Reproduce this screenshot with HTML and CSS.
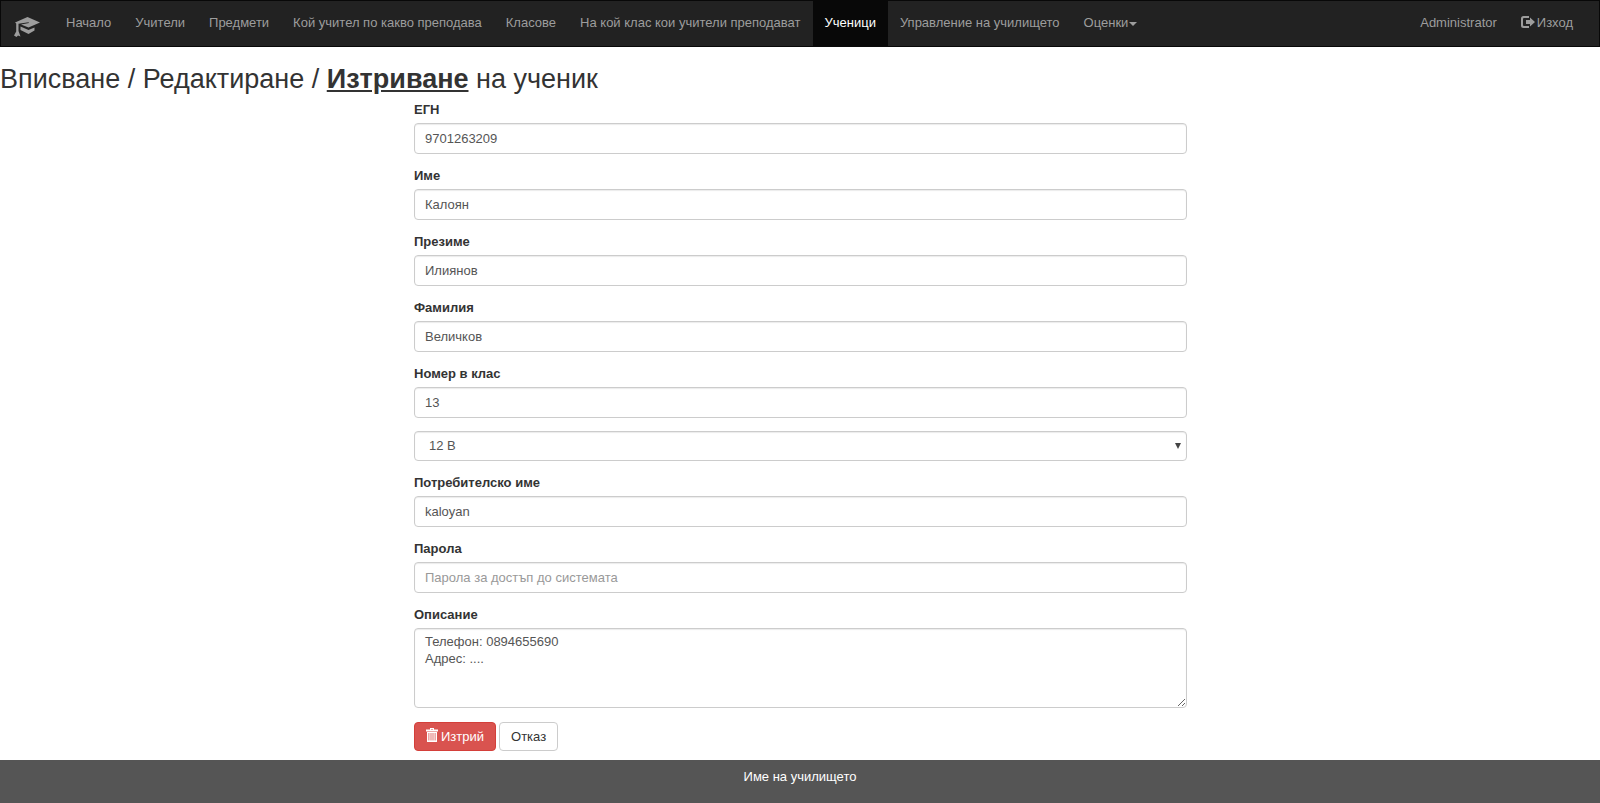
FILE: index.html
```html
<!DOCTYPE html>
<html lang="bg">
<head>
<meta charset="utf-8">
<title>Ученици</title>
<link rel="stylesheet" href="styles.css">
</head>
<body>
<nav class="navbar">
  <a class="brand" href="#" aria-label="Начална страница">
    <svg class="brand-icon" viewBox="0 0 26 20" aria-hidden="true">
      <path d="M13.500 0L26 5.500L14.500 10.500L7 7.500L15 6L14.500 5.200L4.500 6.800V14L6.500 19.500L4 18.500L2.500 20L0 18.500L2.200 14.500V6.500L1 5.500Z"/>
      <path d="M6.500 9.500L14.500 13L20.500 10.500V13.500L14.500 17L6.500 13Z"/>
    </svg>
  </a>
  <ul class="nav">
    <li><a class="nav-link" href="#">Начало</a></li>
    <li><a class="nav-link" href="#">Учители</a></li>
    <li><a class="nav-link" href="#">Предмети</a></li>
    <li><a class="nav-link" href="#">Кой учител по какво преподава</a></li>
    <li><a class="nav-link" href="#">Класове</a></li>
    <li><a class="nav-link" href="#">На кой клас кои учители преподават</a></li>
    <li><a class="nav-link active" href="#">Ученици</a></li>
    <li><a class="nav-link" href="#">Управление на училището</a></li>
    <li><a class="nav-link" href="#">Оценки<span class="caret"></span></a></li>
  </ul>
  <ul class="nav nav-right">
    <li><a class="nav-link" href="#">Administrator</a></li>
    <li><a class="nav-link" href="#"><svg class="logout-icon" viewBox="0 0 14 12" aria-hidden="true"><path d="M8 0H2.500Q0 0 0 2.500V9.500Q0 12 2.500 12H8V10H3Q2 10 2 9V3Q2 2 3 2H8Z"/><path d="M9 1.500L14 6L9 10.500V8H5V4H9Z"/></svg>Изход</a></li>
  </ul>
</nav>
<main>
  <h2 class="title">Вписване / Редактиране / <strong class="current">Изтриване</strong> на ученик</h2>
  <form class="form">
    <div class="group"><label class="label" for="egn">ЕГН</label><input class="control" id="egn" type="text" value="9701263209"></div>
    <div class="group"><label class="label" for="first">Име</label><input class="control" id="first" type="text" value="Калоян"></div>
    <div class="group"><label class="label" for="middle">Презиме</label><input class="control" id="middle" type="text" value="Илиянов"></div>
    <div class="group"><label class="label" for="last">Фамилия</label><input class="control" id="last" type="text" value="Величков"></div>
    <div class="group"><label class="label" for="number">Номер в клас</label><input class="control" id="number" type="text" value="13"></div>
    <div class="group select-wrap"><select class="control select" aria-label="Клас"><option>12 В</option></select></div>
    <div class="group"><label class="label" for="user">Потребителско име</label><input class="control" id="user" type="text" value="kaloyan"></div>
    <div class="group"><label class="label" for="pass">Парола</label><input class="control" id="pass" type="password" placeholder="Парола за достъп до системата"></div>
    <div class="group"><label class="label" for="about">Описание</label><textarea class="control area" id="about">Телефон: 0894655690
Адрес: ....</textarea></div>
    <div class="actions">
      <button class="btn btn-danger" type="submit"><svg class="trash-icon" viewBox="0 0 12 14" aria-hidden="true"><path fill-rule="evenodd" d="M4 0H8V1.500H12V3.500H0V1.500H4ZM5 1V1.500H7V1ZM1 4H11V14H1ZM2.500 5V12.500H3.300V5ZM4.600 5V12.500H5.400V5ZM6.600 5V12.500H7.400V5ZM8.700 5V12.500H9.500V5Z"/></svg>Изтрий</button>
      <button class="btn" type="button">Отказ</button>
    </div>
  </form>
</main>
<footer class="footer">Име на училището</footer>
</body>
</html>
```
FILE: styles.css
```css
* { box-sizing: border-box; }

body {
  margin: 0;
  min-height: 100vh;
  display: flex;
  flex-direction: column;
  background: #fff;
  color: #333;
  font: 13px/18px "Liberation Sans", Arial, sans-serif;
}

.navbar {
  display: flex;
  justify-content: space-between;
  background: #222;
  border: 1px solid #080808;
  padding-right: 14px;
}

.brand {
  display: flex;
  align-items: center;
  padding: 6px 14px 0 13px;
}

.brand-icon {
  width: 26px;
  height: 20px;
  fill: #9d9d9d;
}

.nav {
  display: flex;
  list-style: none;
  margin: 0;
  padding: 0;
}

.nav-right { margin-left: auto; }

.nav-link {
  display: block;
  padding: 13px 12px 14px;
  color: #9d9d9d;
  text-decoration: none;
  white-space: nowrap;
}

.active {
  background: #080808;
  color: #fff;
}

.caret {
  display: inline-block;
  margin-left: 1px;
  vertical-align: middle;
  border-top: 4px solid;
  border-right: 4px solid transparent;
  border-left: 4px solid transparent;
}

.logout-icon {
  width: 14px;
  height: 12px;
  margin-right: 2px;
  vertical-align: -1px;
  fill: currentColor;
}

.title {
  margin: 17px 0 7px;
  font-size: 27px;
  line-height: 30px;
  font-weight: 400;
}

.current {
  font-weight: 700;
  text-decoration: underline;
}

.form {
  width: 50%;
  margin: 0 auto;
  padding: 0 13px 0 14px;
}

.group { margin-bottom: 13px; }

.label {
  display: block;
  margin-bottom: 4px;
  font-weight: 700;
}

.control {
  display: block;
  width: 100%;
  height: 31px;
  padding: 5px 10px;
  border: 1px solid #ccc;
  border-radius: 4px;
  background: #fff;
  box-shadow: inset 0 1px 1px rgba(0, 0, 0, 0.08);
  color: #555;
  font: inherit;
}

.control::placeholder { color: #999; }

.select-wrap { position: relative; }

.select {
  height: 30px;
  padding: 0 14px;
  appearance: none;
}

.select-wrap::after {
  content: "";
  position: absolute;
  top: 12px;
  right: 6px;
  border-top: 6px solid #444;
  border-right: 3px solid transparent;
  border-left: 3px solid transparent;
  pointer-events: none;
}

.area {
  height: 80px;
  padding-top: 4px;
  line-height: 17px;
  resize: vertical;
}

.actions {
  display: flex;
  gap: 3px;
  padding: 1px 0 9px;
}

.btn {
  height: 29px;
  padding: 0 11px;
  border: 1px solid #ccc;
  border-radius: 4px;
  background: #fff;
  color: #333;
  font: inherit;
}

.btn-danger {
  border-color: #d43f3a;
  background: #d9534f;
  color: #fff;
}

.trash-icon {
  width: 12px;
  height: 14px;
  margin-right: 3px;
  vertical-align: -1px;
  fill: currentColor;
}

.footer {
  flex: 1;
  padding: 8px;
  background: #555;
  color: #fff;
  text-align: center;
}
```
